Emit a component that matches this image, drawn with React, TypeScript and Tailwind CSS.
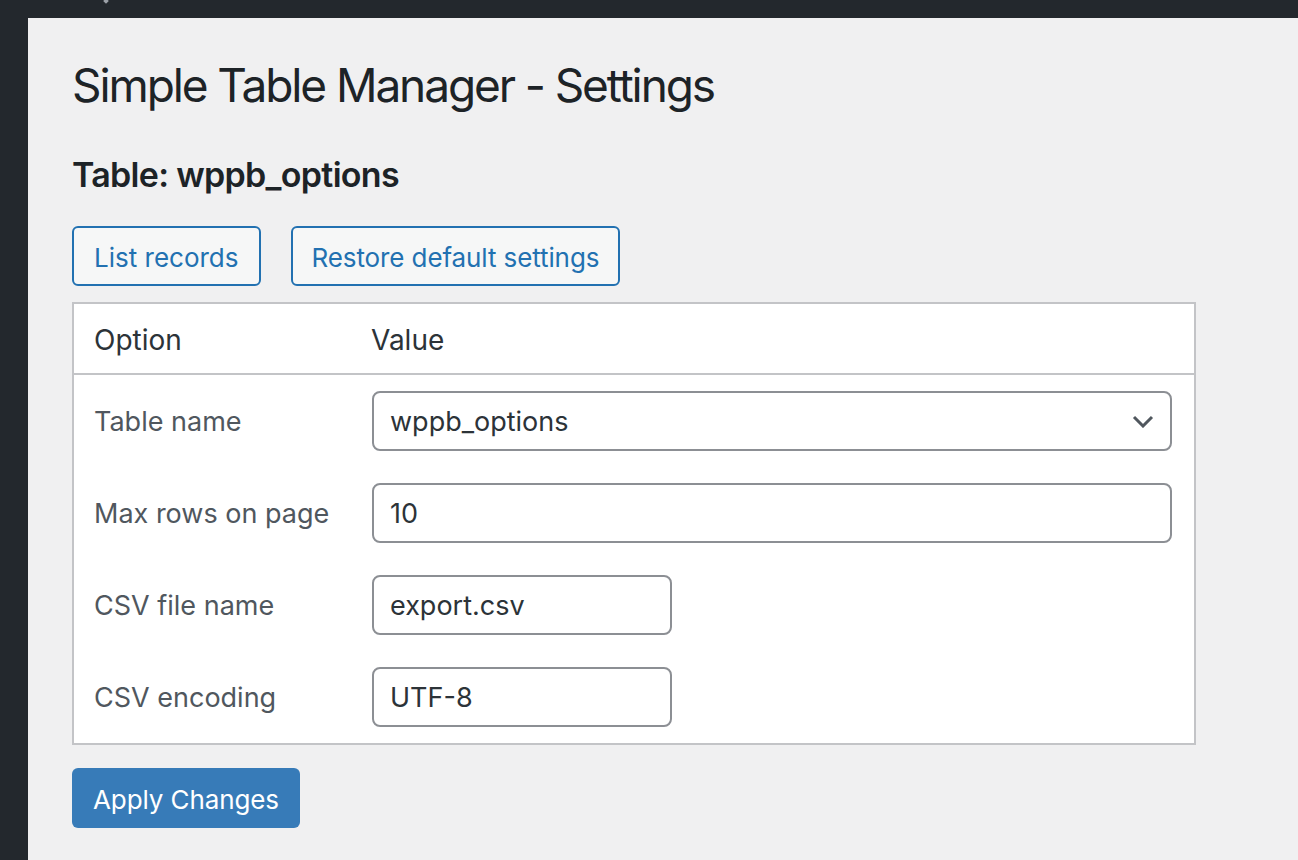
import React from 'react'

const rows = [
    { label: 'Max rows on page', value: '10', wide: true },
    { label: 'CSV file name', value: 'export.csv', wide: false },
    { label: 'CSV encoding', value: 'UTF-8', wide: false },
]

const Chevron = () => (
    <svg width="22" height="13" viewBox="0 0 22 13" fill="none" className="shrink-0">
        <path d="M2 2 L11 11 L20 2" stroke="#50575e" strokeWidth="3" />
    </svg>
)

export default function App() {
    return (
        <div className="min-h-screen flex flex-col bg-[#f0f0f1] font-['Inter','Liberation_Sans',sans-serif]">
            {/* admin bar */}
            <div className="relative h-[18px] shrink-0 bg-[#23282d]">
                <span className="absolute left-[104px] top-0 w-[4px] h-[4px] bg-[#9ca1a8] rotate-45 -translate-y-[1px]" />
            </div>

            <div className="flex flex-1">
                {/* admin menu */}
                <div className="w-[28px] shrink-0 bg-[#23282d]" />

                <main className="flex-1 pl-[44px]">
                    <h1 className="mt-[37px] text-[46px] leading-[60px] font-normal tracking-[-2.1px] text-[#1d2327]">
                        Simple Table Manager - Settings
                    </h1>

                    <h2 className="mt-[38px] text-[34px] leading-[44px] font-semibold tracking-[-0.7px] text-[#1d2327]">
                        Table: wppb_options
                    </h2>

                    <div className="mt-[29px] flex gap-[30px]">
                        <button className="h-[60px] pt-[2px] px-[20px] rounded-[6px] border-2 border-[#2271b1] bg-[#f6f7f7] text-[26px] text-[#2271b1]">
                            List records
                        </button>
                        <button className="h-[60px] pt-[2px] px-[19px] rounded-[6px] border-2 border-[#2271b1] bg-[#f6f7f7] text-[26px] tracking-[-0.1px] text-[#2271b1]">
                            Restore default settings
                        </button>
                    </div>

                    <div className="mt-[16px] w-[1124px] border-2 border-[#c3c4c7] bg-white">
                        <div className="flex h-[71px] border-b-2 border-[#c3c4c7] items-center pt-[2px] text-[28px] text-[#2c3338]">
                            <div className="w-[277px] pl-[20px]">Option</div>
                            <div className="pl-[20px]">Value</div>
                        </div>

                        <div className="flex h-[92px] items-center">
                            <div className="w-[277px] pl-[20px] pt-[3px] text-[27px] text-[#50575e]">Table name</div>
                            <div className="pl-[21px]">
                                <div className="w-[800px] h-[60px] flex items-center justify-between pl-[16px] pr-[16px] rounded-[8px] border-2 border-[#8c8f94] text-[27px] text-[#2c3338]">
                                    <span className="pt-[3px]">wppb_options</span>
                                    <Chevron />
                                </div>
                            </div>
                        </div>

                        {rows.map((r) => (
                            <div key={r.label} className="flex h-[92px] items-center">
                                <div className="w-[277px] pl-[20px] pt-[3px] text-[27px] text-[#50575e]">{r.label}</div>
                                <div className="pl-[21px]">
                                    <div
                                        className={`${r.wide ? 'w-[800px]' : 'w-[300px]'} h-[60px] flex items-center pl-[16px] pt-[3px] rounded-[8px] border-2 border-[#8c8f94] text-[27px] text-[#2c3338]`}
                                    >
                                        {r.value}
                                    </div>
                                </div>
                            </div>
                        ))}
                    </div>

                    <button className="mt-[23px] h-[60px] pt-[2px] px-[21px] rounded-[6px] bg-[#377bb8] text-[26px] tracking-[-0.1px] text-white">
                        Apply Changes
                    </button>
                </main>
            </div>
        </div>
    )
}
